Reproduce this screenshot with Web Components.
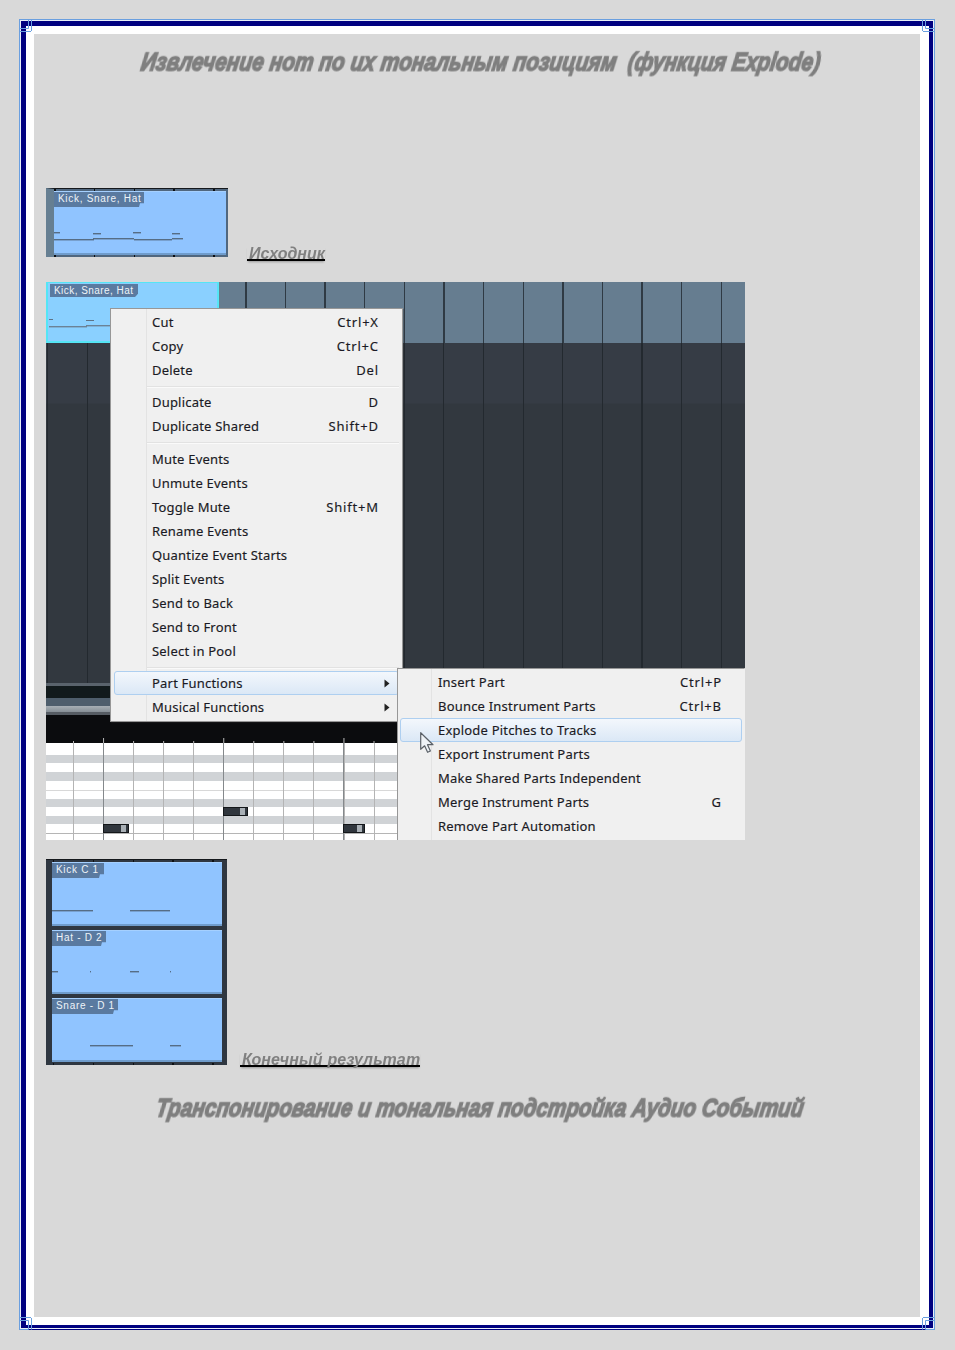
<!DOCTYPE html>
<html lang="ru">
<head>
<meta charset="utf-8">
<title>Explode</title>
<style>
  html, body { margin: 0; padding: 0; background: #d9d9d9; }
</style>
</head>
<body>
<page-frame>
  <doc-title scale="0.803">Извлечение нот по их тональным позициям&nbsp; (функция Explode)</doc-title>

  <fig-row top="98" gap="19">
    <daw-thumb variant="single">
      <daw-part label="Kick, Snare, Hat" height="64" tab="90"
        notes="0,41,6 0,48,40 39,42,47 39,47,80 79,41,87 80,48,118 118,42,126 118,47,129"></daw-part>
    </daw-thumb>
    <fig-caption>Исходник</fig-caption>
  </fig-row>

  <fig-row top="25"><daw-screen></daw-screen></fig-row>

  <fig-row top="19" gap="13">
    <daw-thumb variant="stack">
      <daw-part label="Kick C 1" height="64" tab="52" notes="0,48,41 78,48,118"></daw-part>
      <daw-part label="Hat - D 2" height="64" tab="54" notes="0,41,6 38,41,39 78,41,87 118,41,119"></daw-part>
      <daw-part label="Snare - D 1" height="64" tab="66" notes="38,47,81 118,47,129"></daw-part>
    </daw-thumb>
    <fig-caption drop="2" spacing="0.15">Конечный результат</fig-caption>
  </fig-row>

  <doc-title top="15" scale="0.795">Транспонирование и тональная подстройка Аудио Событий</doc-title>
</page-frame>

<script>
// outer double border with the little corner marks
class PageFrame extends HTMLElement {
  constructor() {
    super();
    this.attachShadow({ mode: "open" });
    const corner = (cls) => `
      <svg class="corner ${cls}" width="14" height="14" viewBox="0 0 14 14" fill="none" stroke="#6a9fdf">
        <path d="M.5 .5H9.5V9.5H.5Z"/>
        <path d="M12.5 .5V12M.5 12.5H12" stroke-width="1"/>
      </svg>`;
    this.shadowRoot.innerHTML = `
      <style>
        :host {
          display: block;
          font-family: "Liberation Sans", Arial, sans-serif;
        }
        .page { padding: 19px 19px 20px 19px; }
        .outer {
          position: relative;
          box-sizing: border-box;
          width: 916px;
          height: 1311px;
          border: 1px solid #6a9fdf;
          outline: 1px solid #e8eff8;
          outline-offset: -2px;
        }
        .navy {
          box-sizing: border-box;
          height: 100%;
          margin: 1px;
          border-style: solid;
          border-color: #000080;
          border-width: 5px 4px 5px 5px;
          background: #fff;
          padding: 8px 9px 8px 8px;
        }
        .inner {
          box-sizing: border-box;
          height: 100%;
          background: #d9d9d9;
          padding: 0 12px;
        }
        .corner { position: absolute; }
        .tl { left: -1px; top: -1px; }
        .tr { right: -1px; top: -1px; transform: scaleX(-1); }
        .bl { left: -1px; bottom: -1px; transform: scaleY(-1); }
        .br { right: -1px; bottom: -1px; transform: scale(-1, -1); }
      </style>
      <div class="page">
        <div class="outer">
          <div class="navy"><div class="inner"><slot></slot></div></div>
          ${corner("tl")}${corner("tr")}${corner("bl")}${corner("br")}
        </div>
      </div>
    `;
  }
}

// heavy condensed italic heading; no such face is installed, so squeeze a bold one
class DocTitle extends HTMLElement {
  constructor() {
    super();
    this.attachShadow({ mode: "open" });
    const top = this.getAttribute("top") || 0;
    const scale = this.getAttribute("scale") || 0.8;
    this.shadowRoot.innerHTML = `
      <style>
        :host {
          display: block;
          margin-top: ${top}px;
          height: 56px;
          padding-left: 7px;
          text-align: center;
          white-space: nowrap;
          color: #7f7f7f;
          font: italic bold 26px/56px "Liberation Sans", sans-serif;
        }
        span {
          display: inline-block;
          margin: 0 -120px;
          transform: scaleX(${scale}) skewX(-11deg);
          -webkit-text-stroke: 1.5px #7f7f7f;
          filter: blur(0.6px);
        }
      </style>
      <span><slot></slot></span>
    `;
  }
}

class FigRow extends HTMLElement {
  constructor() {
    super();
    this.attachShadow({ mode: "open" });
    const top = this.getAttribute("top") || 0;
    const gap = this.getAttribute("gap") || 0;
    this.shadowRoot.innerHTML = `
      <style>
        :host {
          display: flex;
          align-items: flex-end;
          margin-top: ${top}px;
          gap: ${gap}px;
        }
      </style>
      <slot></slot>
    `;
  }
}

class FigCaption extends HTMLElement {
  constructor() {
    super();
    this.attachShadow({ mode: "open" });
    const drop = this.getAttribute("drop") || 4;
    const spacing = this.getAttribute("spacing") || 0;
    this.shadowRoot.innerHTML = `
      <style>
        :host {
          display: block;
          margin-bottom: -${drop}px;
          padding: 0 0 0 2px;
          height: 13px;
          border-bottom: 2px solid #000;
          box-shadow: 0 2px 2px -1px #999;
          color: #808080;
          font: italic bold 16px/16px "Liberation Sans", sans-serif;
          letter-spacing: ${spacing}px;
          white-space: nowrap;
        }
        span { filter: blur(0.4px); display: block; }
      </style>
      <span><slot></slot></span>
    `;
  }
}

// small arrangement screenshot: dark frame with ruler ticks and blue parts
class DawThumb extends HTMLElement {
  constructor() {
    super();
    this.attachShadow({ mode: "open" });
    const single = this.getAttribute("variant") === "single";
    const offset = single ? 0 : 7;
    const tickRow = "repeating-linear-gradient(90deg, #0d0f12 0, #0d0f12 1.5px, transparent 1.5px, transparent 39.8px)";
    this.shadowRoot.innerHTML = `
      <style>
        :host {
          display: block;
          position: relative;
          box-sizing: border-box;
          width: ${single ? 182 : 181}px;
          background: ${single ? "#50677f" : "#2f3741"};
          border-top: 1px solid #15181c;
          padding: ${single ? "2px 2px 2px 0" : "2px 5px 3px 6px"};
          ${single ? "border-left: 8px solid #667f92;" : ""}
        }
        .stack { display: flex; flex-direction: column; gap: 4px; }
        .top, .bottom {
          position: absolute;
          left: ${offset}px;
          right: 0;
          height: 2px;
          background: ${tickRow};
        }
        .top { top: 0; }
        .bottom { bottom: 0; }
      </style>
      <div class="stack"><slot></slot></div>
      <div class="top"></div>
      <div class="bottom"></div>
    `;
  }
}

// one blue part: label tab on top, note lines drawn as svg
class DawPart extends HTMLElement {
  constructor() {
    super();
    this.attachShadow({ mode: "open" });
    const h = this.getAttribute("height");
    const tab = this.getAttribute("tab");
    const lines = (this.getAttribute("notes") || "").split(" ").filter(Boolean).map((n) => {
      const [x1, y, x2] = n.split(",").map(Number);
      return `<rect x="${x1}" y="${y}" width="${x2 - x1}" height="1.4" fill="#566d85"/>`;
    }).join("");
    this.shadowRoot.innerHTML = `
      <style>
        :host {
          display: block;
          position: relative;
          box-sizing: border-box;
          height: ${h}px;
          background: #90c4ff;
          border-top: 1px solid #a5d0ff;
          border-bottom: 2px solid #6f9ccc;
          overflow: hidden;
        }
        .tab {
          box-sizing: border-box;
          width: ${tab}px;
          height: 15px;
          padding-left: 4px;
          background: #5a7aa0;
          color: #eef3f8;
          font: 10px/14px "Liberation Sans", sans-serif;
          letter-spacing: 0.7px;
          white-space: nowrap;
          clip-path: polygon(0 0, 100% 0, 100% 75%, calc(100% - 4px) 75%, calc(100% - 5px) 100%, 0 100%);
        }
        svg { position: absolute; left: 0; top: -1px; }
      </style>
      <div class="tab">${this.getAttribute("label")}</div>
      <svg width="172" height="${h}">${lines}</svg>
    `;
  }
}

class MenuItem extends HTMLElement {
  constructor() {
    super();
    this.attachShadow({ mode: "open" });
    const arrow = this.hasAttribute("arrow")
      ? `<svg class="arrow" width="6" height="9" viewBox="0 0 6 9"><path d="M.5 .5L5.5 4.5L.5 8.5Z" fill="#222"/></svg>` : "";
    this.shadowRoot.innerHTML = `
      <style>
        :host {
          display: block;
          height: 24px;
          margin: 0 var(--item-inset, 3px);
          position: relative;
        }
        .row {
          box-sizing: border-box;
          height: 24px;
          display: flex;
          align-items: center;
          justify-content: space-between;
          padding: 0 20px 0 37px;
          border: 1px solid transparent;
          border-radius: 3px;
          color: #1a1a24;
          font: 13px/22px "Noto Sans", "Open Sans", sans-serif;
          letter-spacing: 0.2px;
          -webkit-text-stroke: 0.15px #1a1a24;
          white-space: nowrap;
        }
        .keys { letter-spacing: 0.8px; margin-right: -0.8px; }
        :host([active]) .row {
          border-color: #aecff0;
          background: linear-gradient(#f3f7fc, #dbe8f6);
        }
        .arrow { position: absolute; right: 9px; top: 8px; }
      </style>
      <div class="row"><span>${this.getAttribute("label")}</span><span class="keys">${this.getAttribute("keys") || ""}</span></div>
      ${arrow}
    `;
  }
}

class MenuSep extends HTMLElement {
  constructor() {
    super();
    this.attachShadow({ mode: "open" });
    const h = this.getAttribute("height") || 8;
    this.shadowRoot.innerHTML = `
      <style>
        :host {
          display: block;
          height: ${h}px;
          margin-left: 36px;
          margin-right: 3px;
          position: relative;
        }
        div { position: absolute; left: 0; right: 0; top: 4px; height: 1px; background: #e2e2e2; border-bottom: 1px solid #fafafa; }
      </style>
      <div></div>
    `;
  }
}

// popup with the icon gutter line; overlays the screenshot
class CtxMenu extends HTMLElement {
  constructor() {
    super();
    this.attachShadow({ mode: "open" });
    this.shadowRoot.innerHTML = `
      <style>
        :host {
          display: block;
          position: absolute;
          box-sizing: border-box;
          background:
            linear-gradient(#e3e3e3, #e3e3e3) var(--gutter, 35px) 0 / 1px 100% no-repeat,
            #f0f0f0;
          border: 1px solid #979797;
          padding-top: 1px;
          box-shadow: 1px 1px 1px rgba(40,40,40,.35);
        }
      </style>
      <slot></slot>
    `;
  }
}

// the big screenshot: track lane, dark lanes, piano roll, then the two popups
class DawScreen extends HTMLElement {
  constructor() {
    super();
    this.attachShadow({ mode: "open" });
    const item = (label, keys, extra) => `<menu-item label="${label}" ${keys ? `keys="${keys}"` : ""} ${extra || ""}></menu-item>`;
    const ticks = [];
    this.shadowRoot.innerHTML = `
      <style>
        :host {
          display: flex;
          flex-direction: column;
          position: relative;
          width: 699px;
          height: 558px;
          overflow: hidden;
        }
        .band {
          height: 61px;
          flex: none;
          background:
            repeating-linear-gradient(90deg, #2f3a44 0, #2f3a44 1.4px, #667d90 1.4px, #667d90 39.63px) 1px 0,
            #667d90;
        }
        .sel {
          box-sizing: border-box;
          width: 173px;
          height: 61px;
          position: relative;
          background: #8ad0ff;
          border: 2px solid #55e5f5;
          border-top-width: 1px;
        }
        .sel .tab {
          width: 88px;
          height: 13px;
          margin: 1px 0 0 2px;
          padding-left: 4px;
          box-sizing: border-box;
          background: #5a7aa0;
          color: #eef3f8;
          font: 10px/13px "Liberation Sans", sans-serif;
          letter-spacing: .45px;
          white-space: nowrap;
          clip-path: polygon(0 0, 100% 0, 100% 75%, calc(100% - 3px) 100%, 0 100%);
        }
        .sel svg { position: absolute; left: 0; top: 0; }
        .lanes {
          height: 340px;
          flex: none;
          background:
            repeating-linear-gradient(90deg, #23292f 0, #23292f 1.2px, transparent 1.2px, transparent 39.63px) 1px 0,
            linear-gradient(#363c45 0, #363c45 60px, #32383f 61px);
        }
        .strip {
          height: 32px;
          flex: none;
          background: linear-gradient(#5a636c 0, #5a636c 3px, #121a1c 3px, #121a1c 15px,
            #4f5e6c 15px, #4f5e6c 23px, #a8afb5 23px, #868e95 29px, #565c63 29px);
        }
        .ruler {
          height: 28px;
          flex: none;
          background: #0b0c0e;
          position: relative;
        }
        .ruler svg { position: absolute; left: 0; bottom: 0; }
        .roll {
          flex: 1;
          position: relative;
          background:
            repeating-linear-gradient(90deg, #b4b4b4 0, #b4b4b4 1px, transparent 1px, transparent 30.05px) -3px 0,
            linear-gradient(#fff 0, #fff 12px, #d0d3d6 12px, #d0d3d6 20px, #fff 20px, #fff 29px, #d0d3d6 29px, #d0d3d6 38px,
              #fff 38px, #fff 47px, #d8d8d8 47px, #d8d8d8 48px, #fff 48px, #fff 56px, #d0d3d6 56px, #d0d3d6 64px,
              #fff 64px, #fff 73px, #d0d3d6 73px, #d0d3d6 81px, #fff 81px, #fff 90px, #b5b5b5 90px, #b5b5b5 91px, #fff 91px);
        }
        .bar { position: absolute; top: 0; bottom: 0; width: 1px; background: #85898c; }
        .note {
          position: absolute;
          box-sizing: border-box;
          height: 9px;
          background: linear-gradient(90deg, #31373e 0, #31373e calc(100% - 7px), #a9b0b6 calc(100% - 7px), #a9b0b6 calc(100% - 2px), #31373e calc(100% - 2px));
          border: 1px solid #14171a;
        }
        .cursor { position: absolute; left: 374px; top: 450px; }
      </style>
      <div class="band">
        <div class="sel">
          <div class="tab">Kick, Snare, Hat</div>
          <svg width="170" height="58">
            <rect x="1" y="36" width="4" height="1" fill="#5e7387"/>
            <rect x="1" y="43" width="38" height="1.4" fill="#6b8296"/>
            <rect x="38" y="37" width="8" height="1" fill="#5e7387"/>
            <rect x="38" y="42" width="30" height="1.4" fill="#6b8296"/>
          </svg>
        </div>
      </div>
      <div class="lanes"></div>
      <div class="strip"></div>
      <div class="ruler">
        <svg width="699" height="5" id="ticks"></svg>
      </div>
      <div class="roll">
        <div class="bar" style="left:57px"></div>
        <div class="bar" style="left:177px"></div>
        <div class="bar" style="left:297px"></div>
        <div class="note" style="left:57px;top:81px;width:26px"></div>
        <div class="note" style="left:177px;top:64px;width:25px"></div>
        <div class="note" style="left:297px;top:81px;width:22px"></div>
      </div>

      <ctx-menu style="left:64px;top:26px;width:293px;height:414px">
        ${item("Cut", "Ctrl+X")}${item("Copy", "Ctrl+C")}${item("Delete", "Del")}
        <menu-sep></menu-sep>
        ${item("Duplicate", "D")}${item("Duplicate Shared", "Shift+D")}
        <menu-sep height="9"></menu-sep>
        ${item("Mute Events")}${item("Unmute Events")}${item("Toggle Mute", "Shift+M")}
        ${item("Rename Events")}${item("Quantize Event Starts")}${item("Split Events")}
        ${item("Send to Back")}${item("Send to Front")}${item("Select in Pool")}
        <menu-sep></menu-sep>
        ${item("Part Functions", "", "arrow active")}${item("Musical Functions", "", "arrow")}
      </ctx-menu>

      <ctx-menu style="left:351px;top:386px;width:348px;height:174px;border-right-color:#f0f0f0;--gutter:33px;--item-inset:2px">
        ${item("Insert Part", "Ctrl+P")}${item("Bounce Instrument Parts", "Ctrl+B")}
        ${item("Explode Pitches to Tracks", "", "active")}${item("Export Instrument Parts")}
        ${item("Make Shared Parts Independent")}${item("Merge Instrument Parts", "G")}
        ${item("Remove Part Automation")}
      </ctx-menu>

      <svg class="cursor" width="16" height="22" viewBox="0 0 16 22">
        <path d="M.7 .7V17.3L4.6 13.8L7.6 20.3L10.4 19L7.5 12.7H13Z" fill="#eef2f6" stroke="#5b6168" stroke-width="1.2" stroke-linejoin="round"/>
      </svg>
    `;
    // ruler ticks every 30px, taller on the bars
    const svg = this.shadowRoot.getElementById("ticks");
    for (let i = 0; i < 12; i++) {
      const x = 27 + i * 30.05;
      const major = (i - 1) % 4 === 0;
      ticks.push(`<rect x="${x}" y="${major ? 0 : 3}" width="1" height="${major ? 5 : 2}" fill="#b8b8b8"/>`);
    }
    svg.innerHTML = ticks.join("");
  }
}

customElements.define("page-frame", PageFrame);
customElements.define("doc-title", DocTitle);
customElements.define("fig-row", FigRow);
customElements.define("fig-caption", FigCaption);
customElements.define("daw-thumb", DawThumb);
customElements.define("daw-part", DawPart);
customElements.define("menu-item", MenuItem);
customElements.define("menu-sep", MenuSep);
customElements.define("ctx-menu", CtxMenu);
customElements.define("daw-screen", DawScreen);
</script>
</body>
</html>
